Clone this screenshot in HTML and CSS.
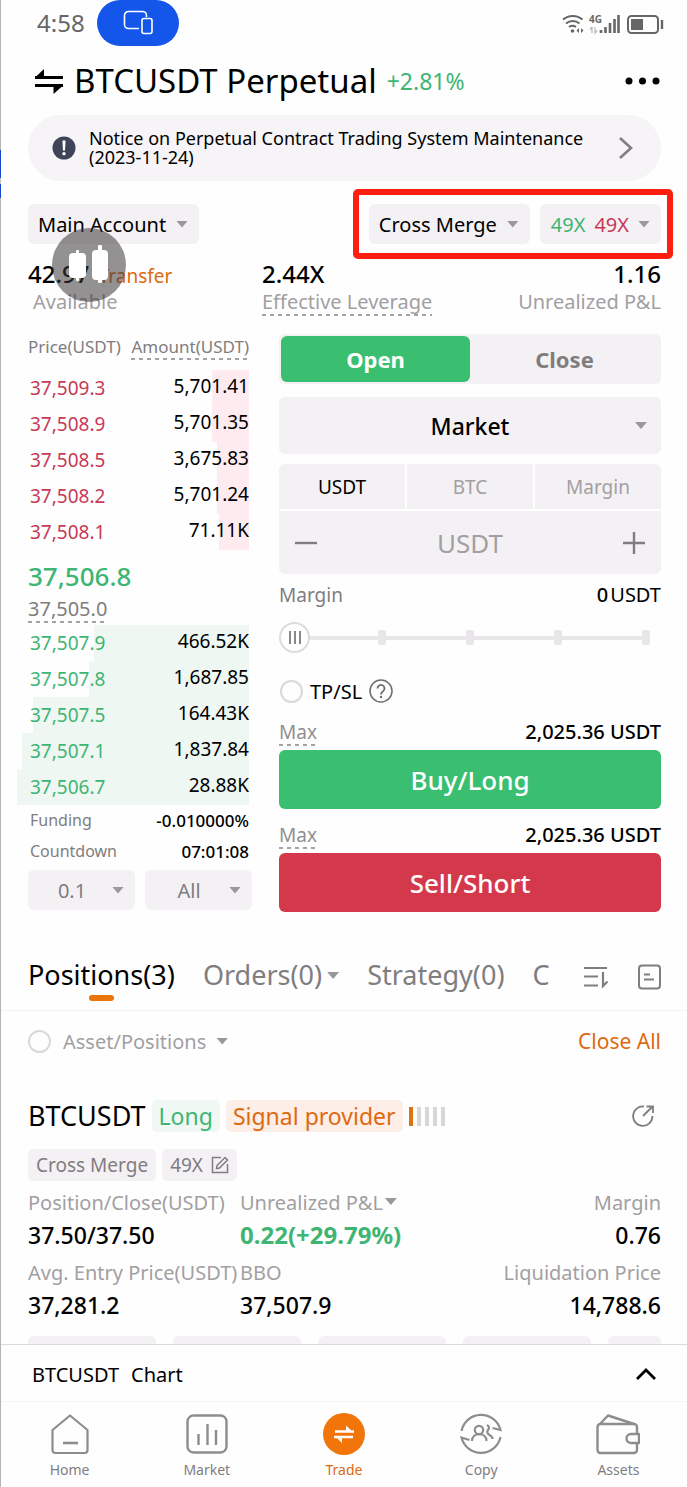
FILE: index.html
```html
<!DOCTYPE html>
<html lang="en">
<head>
	<meta charset="utf-8">
	<title>BTCUSDT Perpetual</title>
	<meta name="viewport" content="width=device-width">
	<link rel="stylesheet" href="styles.css">
</head>
<body>
	<div class="edge"></div>

	<div class="status-bar">
		<span class="clock">4:58</span>
		<span class="cast-pill">
			<svg width="30" height="26" viewBox="0 0 30 26" fill="none" stroke="#fff" stroke-width="1.6">
				<path d="M16 18.500H5.500a4 4 0 0 1-4-4V5.500a4 4 0 0 1 4-4h14a4 4 0 0 1 4 4v1.500"/>
				<rect x="19" y="8.500" width="10" height="15" rx="2"/>
			</svg>
		</span>
		<svg class="status-icons" width="104" height="24" viewBox="0 0 104 24" fill="none" stroke="#666">
			<path d="M2 8.500a15 15 0 0 1 19.500 0M5 12.500a10.500 10.500 0 0 1 13.500 0M8 16a6 6 0 0 1 7 0" stroke-width="2"/>
			<circle cx="11.500" cy="20" r="1.800" fill="#666" stroke="none"/>
			<path d="M18 17v5l-2.500-2.500zM20 17v5l2.500-2.500z" fill="#666" stroke="none"/>
			<text x="28" y="12" class="net-label">4G</text>
			<path d="M31 16v6M31 16l-2 2.500M34 16v6l2-2.500" stroke="#bbb" stroke-width="1.300"/>
			<path d="M40 22v-3M44.500 22v-6M49 22v-10M53.500 22v-14M57.500 22V4" stroke-width="2.600"/>
			<rect x="67" y="5" width="30" height="17" rx="3.500" stroke-width="2"/>
			<rect x="70" y="8" width="12" height="11" fill="#666" stroke="none"/>
			<path d="M101 9v9" stroke-width="2.400"/>
		</svg>
	</div>

	<header class="title-bar">
		<svg width="30" height="26" viewBox="0 0 30 26" fill="none" stroke="#000" stroke-width="3">
			<path d="M1 9.500h28M1 17.500h28"/>
			<path d="M1 9.500L10 1v9zM29 17.500L19.500 26v-9z" fill="#000" stroke="none"/>
		</svg>
		<h1>BTCUSDT Perpetual</h1>
		<span class="change">+2.81%</span>
		<button class="icon-button more" aria-label="More">
			<svg width="36" height="8" viewBox="0 0 36 8"><circle cx="4" cy="4" r="3.500"/><circle cx="17.500" cy="4" r="3.500"/><circle cx="31" cy="4" r="3.500"/></svg>
		</button>
	</header>

	<main>
		<a class="notice" href="#notice">
			<svg width="24" height="24" viewBox="0 0 24 24">
				<circle cx="12" cy="12" r="11.500" fill="#3f4459"/>
				<path d="M10.400 4.500h3.200l-.6 10h-2z" fill="#fff"/>
				<circle cx="12" cy="17.800" r="1.700" fill="#fff"/>
			</svg>
			<span class="notice-text">Notice on Perpetual Contract Trading System Maintenance (2023-11-24)</span>
			<svg width="16" height="24" viewBox="0 0 16 24" fill="none" stroke="#807d80" stroke-width="2.600"><path d="M2 2l11 10L2 22"/></svg>
		</a>

		<div class="account-row">
			<div class="picker account">
				<select aria-label="Account"><option>Main Account</option></select>
			</div>
			<div class="mode-group">
				<div class="picker">
					<select aria-label="Margin mode"><option>Cross Merge</option></select>
				</div>
				<button class="leverage"><span class="up">49X</span><span class="down">49X</span><i class="arrow"></i></button>
			</div>
		</div>

		<div class="stats">
			<div class="stat">
				<div class="stat-value">42.97 <a class="transfer" href="#transfer">Transfer</a></div>
				<span class="stat-label available">Available</span>
				<button class="float-chart" aria-label="Chart">
					<svg width="42" height="40" viewBox="0 0 42 40" fill="#fff">
						<rect x="1" y="8" width="17" height="25" rx="4"/><rect x="8" y="5" width="3" height="31" rx="1"/>
						<rect x="24" y="5" width="16" height="30" rx="4"/><rect x="30" y="0" width="4" height="38" rx="1"/>
					</svg>
				</button>
			</div>
			<div class="stat">
				<div class="stat-value">2.44X</div>
				<span class="stat-label dashed">Effective Leverage</span>
			</div>
			<div class="stat">
				<div class="stat-value">1.16</div>
				<span class="stat-label">Unrealized P&amp;L</span>
			</div>
		</div>

		<div class="trade">
			<section class="book">
				<table>
					<thead>
						<tr><th>Price(USDT)</th><th><span class="dashed">Amount(USDT)</span></th></tr>
					</thead>
					<tbody class="asks">
						<tr style="--depth: 16%"><td>37,509.3</td><td>5,701.41</td></tr>
						<tr style="--depth: 16%"><td>37,508.9</td><td>5,701.35</td></tr>
						<tr style="--depth: 14%"><td>37,508.5</td><td>3,675.83</td></tr>
						<tr style="--depth: 14%"><td>37,508.2</td><td>5,701.24</td></tr>
						<tr style="--depth: 13%"><td>37,508.1</td><td>71.11K</td></tr>
					</tbody>
					<tbody class="mid">
						<tr><td colspan="2"><div class="last-price">37,506.8</div><span class="index-price dashed">37,505.0</span></td></tr>
					</tbody>
					<tbody class="bids">
						<tr style="--depth: 67%"><td>37,507.9</td><td>466.52K</td></tr>
						<tr style="--depth: 69%"><td>37,507.8</td><td>1,687.85</td></tr>
						<tr style="--depth: 93%"><td>37,507.5</td><td>164.43K</td></tr>
						<tr style="--depth: 98%"><td>37,507.1</td><td>1,837.84</td></tr>
						<tr style="--depth: 100%"><td>37,506.7</td><td>28.88K</td></tr>
					</tbody>
				</table>
				<div class="funding"><span>Funding</span><b>-0.010000%</b></div>
				<div class="funding"><span>Countdown</span><b>07:01:08</b></div>
				<div class="book-filters">
					<div class="picker"><select aria-label="Price step"><option>0.1</option></select></div>
					<div class="picker"><select aria-label="Side"><option>All</option></select></div>
				</div>
			</section>

			<section class="order">
				<div class="side-switch">
					<button class="active">Open</button>
					<button>Close</button>
				</div>
				<div class="picker order-type">
					<select aria-label="Order type"><option>Market</option></select>
				</div>
				<div class="unit-tabs">
					<button class="active">USDT</button>
					<button>BTC</button>
					<button>Margin</button>
				</div>
				<div class="stepper">
					<button class="icon-button" aria-label="Less"><svg width="22" height="22" viewBox="0 0 22 22" stroke="#807d80" stroke-width="2.400"><path d="M0 11h22"/></svg></button>
					<input type="text" placeholder="USDT" aria-label="Amount">
					<button class="icon-button" aria-label="More"><svg width="22" height="22" viewBox="0 0 22 22" stroke="#807d80" stroke-width="2.400"><path d="M0 11h22M11 0v22"/></svg></button>
				</div>
				<div class="margin-row"><label for="amountRange">Margin</label><span><b>0</b> USDT</span></div>
				<div class="slider">
					<div class="ticks"><i></i><i></i><i></i><i></i><i></i></div>
					<input type="range" id="amountRange" min="0" max="100" value="0">
				</div>
				<div class="tpsl">
					<input type="checkbox" id="tpsl">
					<label for="tpsl">TP/SL</label>
					<svg width="24" height="24" viewBox="0 0 24 24" fill="none" stroke="#6f6c6f" stroke-width="1.500">
						<circle cx="12" cy="12" r="11"/>
						<path d="M8.500 9.500a3.500 3.500 0 1 1 5.500 2.800c-1.300 1-2 1.500-2 3.200" stroke-width="1.800"/>
						<circle cx="12" cy="18" r="1.200" fill="#6f6c6f" stroke="none"/>
					</svg>
				</div>
				<div class="max-row"><span class="dashed">Max</span><b>2,025.36 USDT</b></div>
				<button class="submit buy">Buy/Long</button>
				<div class="max-row second"><span class="dashed">Max</span><b>2,025.36 USDT</b></div>
				<button class="submit sell">Sell/Short</button>
			</section>
		</div>
	</main>

	<nav class="list-tabs">
		<div class="tabs">
			<button class="active">Positions(3)</button>
			<button>Orders(0)</button>
			<i class="arrow"></i>
			<button>Strategy(0)</button>
			<button>C</button>
		</div>
		<button class="icon-button" aria-label="Sort">
			<svg width="26" height="26" viewBox="0 0 26 26" fill="none" stroke="#807d80" stroke-width="2.200">
				<path d="M1 4h23M1 12.500h14M1 21.500h14M20 8v14l4.500-4.500"/>
			</svg>
		</button>
		<button class="icon-button" aria-label="History">
			<svg width="24" height="26" viewBox="0 0 24 26" fill="none" stroke="#807d80" stroke-width="2">
				<rect x="2" y="1.500" width="21" height="23" rx="3"/><path d="M7 10.500h6M7 15.500h10"/>
			</svg>
		</button>
	</nav>

	<section class="positions">
		<div class="asset-row">
			<input type="checkbox" id="assetFilter">
			<label for="assetFilter">Asset/Positions</label>
			<i class="arrow"></i>
			<a href="#close-all">Close All</a>
		</div>

		<div class="position-head">
			<h2>BTCUSDT</h2>
			<span class="tag long">Long</span>
			<span class="tag signal">Signal provider</span>
			<span class="level"><i class="on"></i><i></i><i></i><i></i><i></i></span>
			<button class="icon-button share" aria-label="Share">
				<svg width="24" height="24" viewBox="0 0 24 24" fill="none" stroke="#807d80" stroke-width="1.800">
					<path d="M13 2.500A9.700 9.700 0 1 0 21.500 12M12 12l9-9M15.500 2.500H22V9"/>
				</svg>
			</button>
		</div>
		<div class="position-tags">
			<span>Cross Merge</span>
			<span>49X
				<svg width="18" height="18" viewBox="0 0 18 18" fill="none" stroke="#807d80" stroke-width="1.500">
					<path d="M10 1.500H1.500v15h15V8"/><path d="M5.500 12.500l.5-3L14 1.500l2.500 2.500-8 8z"/>
				</svg>
			</span>
		</div>

		<div class="position-grid">
			<div><span>Position/Close(USDT)</span><b>37.50/37.50</b></div>
			<div><span>Unrealized P&amp;L<i class="arrow"></i></span><b class="profit">0.22(+29.79%)</b></div>
			<div><span>Margin</span><b>0.76</b></div>
			<div><span>Avg. Entry Price(USDT)</span><b>37,281.2</b></div>
			<div><span>BBO</span><b>37,507.9</b></div>
			<div><span>Liquidation Price</span><b>14,788.6</b></div>
		</div>
		<div class="actions"><i></i><i></i><i></i><i></i><i></i></div>
	</section>

	<footer>
		<button class="chart-bar">
			<span>BTCUSDT</span><span>Chart</span>
			<svg width="20" height="12" viewBox="0 0 20 12" fill="none" stroke="#000" stroke-width="2.800"><path d="M1 11l9-9 9 9"/></svg>
		</button>
		<nav class="bottom-nav">
			<a href="#home">
				<svg width="42" height="42" viewBox="0 0 42 42" fill="none" stroke="#8f8c8f" stroke-width="2.200" stroke-linejoin="round">
					<path d="M21 2.500L3.500 17v20a3 3 0 0 0 3 3h29a3 3 0 0 0 3-3V17z"/><path d="M14 30h15" stroke-width="2.600"/>
				</svg>
				Home
			</a>
			<a href="#market">
				<svg width="42" height="42" viewBox="0 0 42 42" fill="none" stroke="#8f8c8f" stroke-width="2.400">
					<rect x="1.500" y="2.500" width="39" height="37" rx="6"/><path d="M12.500 21v11M21.500 11v21M30 17v15"/>
				</svg>
				Market
			</a>
			<a href="#trade" class="active">
				<svg width="42" height="42" viewBox="0 0 42 42">
					<circle cx="21" cy="21" r="21" fill="#f17508"/>
					<path d="M12 18.500h19M11 24h19" stroke="#fff" stroke-width="2.600"/>
					<path d="M30.500 19.500L23 12.500v6zM12 23l7 7v-6z" fill="#fff"/>
				</svg>
				Trade
			</a>
			<a href="#copy">
				<svg width="42" height="42" viewBox="0 0 42 42" fill="none" stroke="#8f8c8f" stroke-width="2.200">
					<path d="M1.500 18A20 20 0 0 1 40.500 17l-8-2M40.500 24A20 20 0 0 1 1.500 24.500l8 2.500"/>
					<circle cx="19" cy="17" r="4.200"/>
					<path d="M12 28c0-9 14.500-9 14.500 0M27 12c2.500 1.500 2.500 3 1 5s-.5 4 1.500 5 3 2 3 4"/>
				</svg>
				Copy
			</a>
			<a href="#assets">
				<svg width="44" height="42" viewBox="0 0 44 42" fill="none" stroke="#8f8c8f" stroke-width="2.400" stroke-linejoin="round">
					<path d="M41 20v-6a3 3 0 0 0-3-3H4.500a3 3 0 0 0-3 3v23a3 3 0 0 0 3 3H38a3 3 0 0 0 3-3v-7"/>
					<path d="M4 11l8-8.500L38 11M43 21H35a4 4 0 0 0 0 9h8z"/>
				</svg>
				Assets
			</a>
		</nav>
	</footer>
</body>
</html>
```
FILE: styles.css
```css
* {
	box-sizing: border-box;
}

body {
	position: relative;
	margin: 0;
	background: #fefefe;
	color: #000;
	font-family: "Noto Sans", "Open Sans", sans-serif;
	font-size: 20px;
	white-space: nowrap;
}

button,
select,
input {
	font: inherit;
	color: inherit;
	border: none;
	background: none;
	margin: 0;
	padding: 0;
	outline: none;
}

button,
select {
	cursor: pointer;
}

a {
	color: inherit;
	text-decoration: none;
}

b {
	font-weight: 500;
}

svg {
	display: block;
	flex: none;
}

/* Thin strip along the left side */
.edge {
	position: absolute;
	top: 0;
	bottom: 0;
	left: 0;
	width: 1px;
	background: linear-gradient(#b4b4b4 150px, #1648c8 150px 178px, #c4c4c4 178px 184px, #1648c8 184px 198px, #b4b4b4 198px);
}

.arrow,
.picker::after {
	width: 12px;
	height: 7px;
	background: #9b989b;
	clip-path: polygon(0 0, 100% 0, 50% 100%);
	flex: none;
}

.dashed {
	background: repeating-linear-gradient(90deg, #a5a2a5 0 4px, transparent 4px 8px) bottom / 100% 2px no-repeat;
}

.icon-button {
	display: flex;
	align-items: center;
}

.up {
	color: #3fb574;
}

.down {
	color: #c73a58;
}

/* Status bar */
.status-bar {
	display: flex;
	align-items: center;
	height: 46px;
	padding: 0 22px 0 37px;
}

.clock {
	font-size: 24px;
	line-height: 50px;
	color: #666;
}

.cast-pill {
	display: flex;
	align-items: center;
	justify-content: center;
	width: 82px;
	height: 46px;
	margin-left: 12px;
	border-radius: 23px;
	background: #1456ea;
}

.status-icons {
	margin-left: auto;
}

.net-label {
	font-size: 10px;
	font-weight: 700;
	fill: #666;
	stroke: none;
}

/* Title */
.title-bar {
	display: flex;
	align-items: center;
	height: 69px;
	padding: 0 26px 0 34px;
}

.title-bar h1 {
	margin: 0 10px;
	font-size: 33px;
	font-weight: 400;
	line-height: 46px;
}

.change {
	font-size: 23px;
	line-height: 46px;
	color: #3fb574;
}

.more {
	margin-left: auto;
}

main,
.positions {
	padding: 0 26px 0 28px;
}

.notice {
	display: flex;
	align-items: center;
	min-height: 66px;
	padding: 0 27px 0 24px;
	border-radius: 33px;
	background: #f6f4f6;
}

.notice-text {
	flex: 1;
	padding: 0 20px 0 13px;
	font-size: 18px;
	line-height: 19px;
	white-space: normal;
}

/* Drop-downs */
.picker {
	display: grid;
	align-items: center;
	border-radius: 6px;
	background: #f4f1f4;
}

.picker select {
	grid-area: 1 / 1;
	width: 100%;
	height: 40px;
	padding: 0 32px 0 10px;
	appearance: none;
}

.picker::after {
	content: "";
	grid-area: 1 / 1;
	justify-self: end;
	margin-right: 11px;
	pointer-events: none;
}

.account-row {
	display: flex;
	justify-content: space-between;
	margin-top: 23px;
}

.mode-group {
	position: relative;
	display: flex;
	gap: 10px;
}

/* Red highlight round the mode and leverage pickers */
.mode-group::before {
	content: "";
	position: absolute;
	inset: -15px -12px -15px -16px;
	border: 6px solid #ff1f10;
	border-radius: 5px;
	pointer-events: none;
}

.leverage {
	display: flex;
	align-items: center;
	gap: 9px;
	padding: 0 11px;
	border-radius: 6px;
	background: #f4f1f4;
}

/* Account numbers */
.stats {
	display: grid;
	grid-template-columns: 234fr 200fr 199fr;
	margin-top: 14px;
}

.stat {
	position: relative;
	display: flex;
	flex-direction: column;
	align-items: flex-start;
}

.stat:last-child {
	align-items: flex-end;
}

.stat-value {
	height: 32px;
	font-size: 24px;
	font-weight: 500;
	line-height: 32px;
}

.transfer {
	margin-left: 3px;
	font-size: 19px;
	font-weight: 400;
	color: #dd6a10;
}

.stat-label {
	padding-bottom: 2px;
	line-height: 24px;
	color: #a29fa2;
}

.available {
	margin-left: 5px;
}

.float-chart {
	position: absolute;
	top: -30px;
	left: 24px;
	display: flex;
	align-items: center;
	justify-content: center;
	width: 74px;
	height: 74px;
	border-radius: 50%;
	background: rgba(58, 54, 56, 0.55);
}

/* Order book and order form */
.trade {
	display: grid;
	grid-template-columns: minmax(0, 224fr) minmax(0, 382fr);
	gap: 27px;
	margin-top: 18px;
}

.book table {
	width: calc(100% + 8px);
	margin-left: -11px;
	border-collapse: collapse;
	font-size: 19px;
}

.book th {
	height: 36px;
	padding: 0 0 0 11px;
	font-size: 17px;
	font-weight: 400;
	line-height: 26px;
	text-align: left;
	vertical-align: top;
	color: #807d80;
}

.book th:last-child {
	padding: 0;
	text-align: right;
}

.book th .dashed {
	display: inline-block;
}

.book td {
	height: 36px;
	padding: 0 0 0 13px;
	line-height: 26px;
}

.book td:last-child {
	padding: 0 0 5px;
	text-align: right;
}

.asks tr {
	background: linear-gradient(to left, #fdebef var(--depth), transparent 0);
}

.bids tr {
	background: linear-gradient(to left, #eff7f3 var(--depth), transparent 0);
}

.asks td:first-child {
	color: #c73a58;
}

.bids td:first-child {
	color: #3fb574;
}

.book .mid td {
	height: 75px;
	padding: 6px 0 0 11px;
	text-align: left;
	vertical-align: top;
}

.last-price {
	font-size: 26px;
	font-weight: 500;
	line-height: 40px;
	color: #3fb574;
}

.index-price {
	display: inline-block;
	font-size: 20px;
	line-height: 26px;
	padding-bottom: 1px;
	color: #807d80;
}

.funding {
	display: flex;
	justify-content: space-between;
	padding: 0 3px 0 2px;
	font-size: 16px;
	line-height: 31px;
	color: #807d80;
}

.funding b {
	font-size: 17px;
	color: #000;
}

.book-filters {
	display: grid;
	grid-template-columns: 1fr 1fr;
	gap: 10px;
	margin-top: 3px;
	color: #807d80;
}

.book-filters select {
	padding: 0 29px 0 10px;
	text-align: center;
	text-align-last: center;
}

.side-switch {
	display: grid;
	grid-template-columns: 1fr 1fr;
	height: 50px;
	padding: 2px;
	border-radius: 6px;
	background: #f4f1f4;
}

.side-switch button {
	border-radius: 6px;
	font-size: 22px;
	font-weight: 700;
	color: #807d80;
}

.side-switch .active {
	background: #3abf70;
	color: #fff;
}

.order-type {
	margin-top: 13px;
}

.order-type select {
	height: 57px;
	padding: 0;
	font-size: 23px;
	font-weight: 500;
	text-align: center;
	text-align-last: center;
}

.order-type::after {
	margin-right: 14px;
}

.unit-tabs {
	display: grid;
	grid-template-columns: repeat(3, 1fr);
	gap: 2px;
	height: 45px;
	margin: 10px 0 2px;
	border-radius: 6px 6px 0 0;
	overflow: hidden;
}

.unit-tabs button {
	font-size: 19px;
	background: #f4f1f4;
	color: #a29fa2;
}

.unit-tabs .active {
	color: #000;
}

.stepper {
	display: flex;
	height: 63px;
	padding: 0 16px;
	border-radius: 0 0 6px 6px;
	background: #f4f1f4;
}

.stepper input {
	flex: 1;
	min-width: 0;
	font-size: 26px;
	text-align: center;
}

.stepper input::placeholder {
	color: #a29fa2;
}

.margin-row {
	display: flex;
	justify-content: space-between;
	margin-top: 7px;
	line-height: 28px;
}

.margin-row label {
	font-size: 19px;
	color: #807d80;
}

.margin-row span {
	display: flex;
	gap: 2px;
}

/* Amount slider, the ticks lie under the real range input */
.slider {
	display: grid;
	align-items: center;
	margin-top: 13px;
}

.ticks,
.slider input {
	grid-area: 1 / 1;
}

.ticks {
	display: flex;
	justify-content: space-between;
	margin: 0 11px;
	background: linear-gradient(#e8e6e8, #e8e6e8) center / calc(100% - 8px) 4px no-repeat;
}

.ticks i {
	width: 8px;
	height: 15px;
	border-radius: 2px;
	background: #e8e6e8;
}

.slider input {
	width: 100%;
	height: 31px;
	appearance: none;
}

.slider input::-webkit-slider-thumb {
	appearance: none;
	width: 31px;
	height: 31px;
	border: 2px solid #dddbdd;
	border-radius: 50%;
	background:
		linear-gradient(#8a878a, #8a878a) 8px center / 2px 13px no-repeat,
		linear-gradient(#8a878a, #8a878a) 13px center / 2px 13px no-repeat,
		linear-gradient(#8a878a, #8a878a) 18px center / 2px 13px no-repeat,
		#fff;
}

input[type="checkbox"] {
	appearance: none;
	width: 23px;
	height: 23px;
	border: 2px solid #dad8da;
	border-radius: 50%;
	flex: none;
}

.tpsl {
	display: flex;
	align-items: center;
	gap: 7px;
	height: 24px;
	margin: 26px 0 0 1px;
}

.max-row {
	display: flex;
	justify-content: space-between;
	margin: 16px 0 4px;
	line-height: 26px;
}

.max-row.second {
	margin-top: 13px;
}

.max-row span {
	padding-bottom: 1px;
	font-size: 19px;
	color: #918e91;
}

.submit {
	display: block;
	width: 100%;
	height: 59px;
	border-radius: 6px;
	font-size: 26px;
	font-weight: 500;
	color: #fff;
}

.buy {
	background: #3abf70;
}

.sell {
	background: #d4394b;
}

/* Positions, orders, strategy */
.list-tabs {
	display: flex;
	align-items: flex-start;
	margin-top: 43px;
	padding: 0 26px 0 28px;
	border-bottom: 1px solid #f4f2f4;
}

.tabs {
	flex: 1;
	display: flex;
	min-width: 0;
	margin-right: 33px;
	overflow: hidden;
}

.tabs button {
	display: flex;
	flex-direction: column;
	align-items: center;
	height: 55px;
	margin-right: 28px;
	font-size: 27px;
	line-height: 40px;
	color: #807d80;
}

.tabs button:last-child {
	margin-right: 0;
}

.tabs .active {
	color: #000;
}

.tabs .active::after {
	content: "";
	width: 25px;
	height: 6px;
	border-radius: 3px;
	background: #e9750c;
}

.tabs .arrow {
	margin: 17px 28px 0 -23px;
}

.list-tabs .icon-button {
	height: 44px;
}

.list-tabs .icon-button + .icon-button {
	margin-left: 28px;
}

.asset-row {
	display: flex;
	align-items: center;
	height: 30px;
	margin-top: 15px;
	color: #a29fa2;
}

.asset-row label {
	margin: 0 10px 0 12px;
}

.asset-row a {
	margin-left: auto;
	font-size: 21px;
	color: #dd6a10;
}

.position-head {
	display: flex;
	align-items: center;
	gap: 6px;
	margin-top: 44px;
}

.position-head h2 {
	margin: 0;
	font-size: 27px;
	font-weight: 400;
	line-height: 32px;
}

.tag {
	padding: 0 7px;
	border-radius: 5px;
	font-size: 23px;
	line-height: 32px;
}

.long {
	background: #eff8f3;
	color: #3fb574;
}

.signal {
	background: #feeee8;
	color: #dd6a10;
}

.level {
	display: flex;
	gap: 4px;
}

.level i {
	width: 4px;
	height: 19px;
	background: #d8d6d8;
}

.level .on {
	background: #dd7414;
}

.share {
	margin: 0 6px 0 auto;
}

.position-tags {
	display: flex;
	gap: 6px;
	margin-top: 17px;
}

.position-tags span {
	display: flex;
	align-items: center;
	gap: 8px;
	padding: 0 8px;
	border-radius: 5px;
	font-size: 19px;
	line-height: 32px;
	background: #f4f1f4;
	color: #807d80;
}

.position-grid {
	display: grid;
	grid-template-columns: 212fr 230fr 191fr;
	row-gap: 6px;
	margin-top: 7px;
}

.position-grid span {
	display: block;
	line-height: 30px;
	color: #a29fa2;
}

.position-grid b {
	display: block;
	font-size: 23px;
	line-height: 34px;
}

.position-grid div:nth-child(3n) {
	text-align: right;
}

.position-grid .profit {
	font-size: 24px;
	font-weight: 700;
	color: #3fb574;
}

.position-grid .arrow {
	display: inline-block;
	margin: 0 0 5px 2px;
}

/* Only the top of the action buttons shows above the chart bar */
.actions {
	display: grid;
	grid-template-columns: repeat(4, 128fr) 53fr;
	gap: 17px;
	height: 8px;
	margin-top: 14px;
}

.actions i {
	border-radius: 6px 6px 0 0;
	background: #f4f1f4;
}

.chart-bar {
	display: flex;
	align-items: center;
	gap: 12px;
	width: 100%;
	height: 57px;
	padding: 2px 31px 0 32px;
	border-top: 1px solid #dcdadc;
}

.chart-bar svg {
	margin-left: auto;
}

.bottom-nav {
	display: grid;
	grid-template-columns: repeat(5, 1fr);
	padding: 11px 0 7px 1px;
	border-top: 1px solid #f6f3f6;
}

.bottom-nav a {
	display: flex;
	flex-direction: column;
	align-items: center;
	gap: 5px;
	font-size: 14px;
	line-height: 20px;
	color: #807d80;
}

.bottom-nav .active {
	color: #dd6a10;
}
```
